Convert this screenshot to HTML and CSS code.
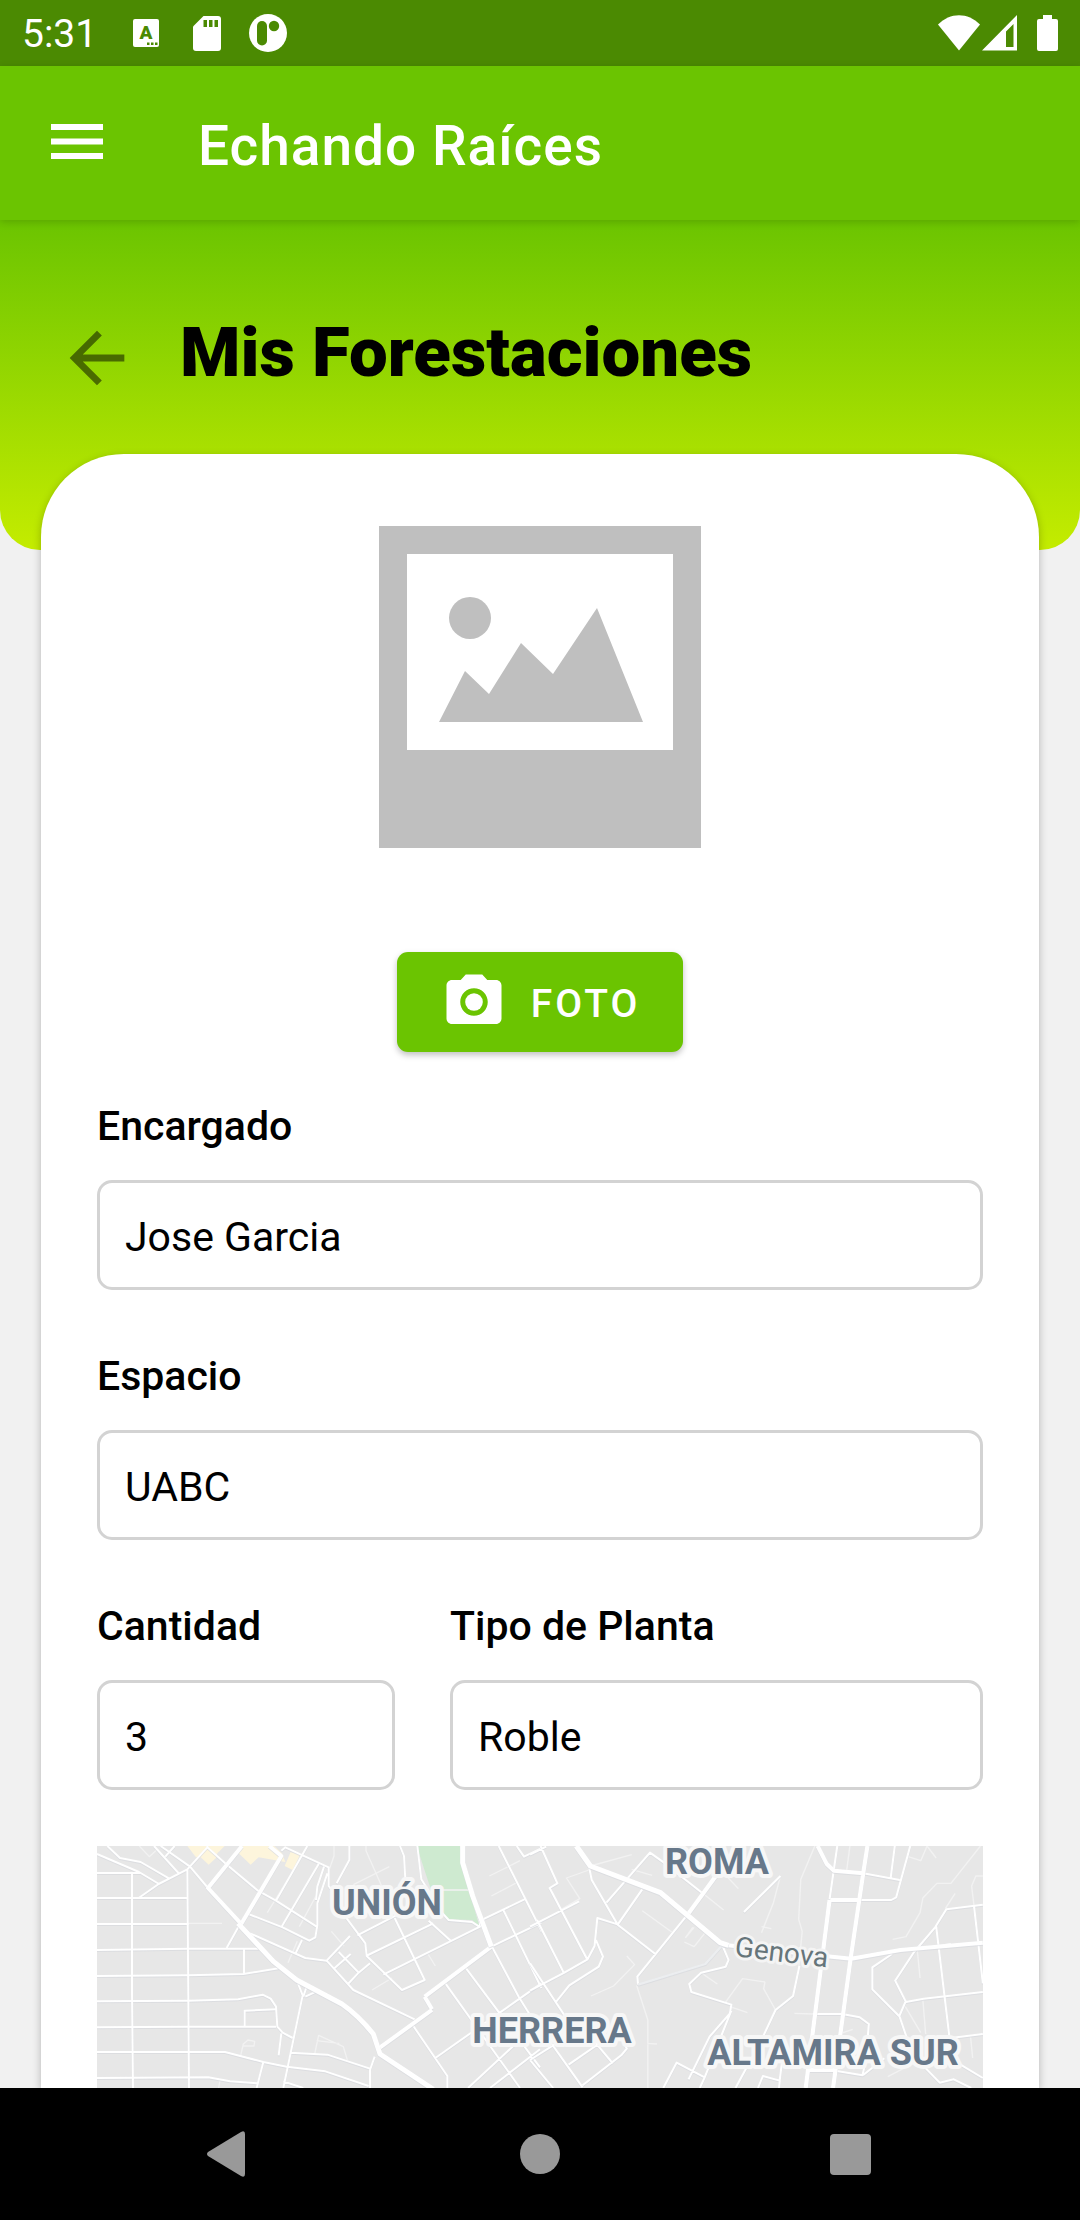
FILE: index.html
```html
<!DOCTYPE html>
<html lang="es">
<head>
<meta charset="utf-8">
<meta name="viewport" content="width=device-width, initial-scale=1">
<title>Echando Raíces</title>
<link rel="stylesheet" href="styles.css">
</head>
<body>
<div class="app">
  <div class="status-bar">
    <span class="clock">5:31</span>
    <div class="notifications">
      <svg class="status-icon" width="26" height="28" viewBox="0 0 26 28" aria-hidden="true">
        <rect width="26" height="28" rx="2" fill="#fff"/>
        <text class="badge-letter" x="13" y="20" text-anchor="middle">A</text>
        <path d="M14 23.500h2.500v2.500h-2.500zM18 23.500h2.500v2.500h-2.500zM22 23.500h2.500v2.500h-2.500z" fill="#4b8a02"/>
      </svg>
      <svg class="status-icon" width="28" height="35" viewBox="0 0 28 35" aria-hidden="true">
        <path d="M10.500 0H25a3 3 0 0 1 3 3v29a3 3 0 0 1-3 3H3a3 3 0 0 1-3-3V10.500z" fill="#fff"/>
        <path d="M10.500 4h3.500v7h-3.500zM16 4h3.500v7H16zM21.500 4H25v7h-3.500z" fill="#4b8a02"/>
      </svg>
      <svg class="status-icon" width="38" height="38" viewBox="0 0 38 38" aria-hidden="true">
        <circle cx="19" cy="19" r="19" fill="#fff"/>
        <rect x="8" y="7" width="10" height="24.500" rx="5" fill="#4b8a02"/>
        <circle cx="25" cy="12" r="5.200" fill="#4b8a02"/>
      </svg>
    </div>
    <div class="system">
      <svg class="status-icon" width="42" height="36" viewBox="0 0 42 36" aria-hidden="true">
        <path d="M21 35.500 0 9.500C12-3 30-3 42 9.500z" fill="#fff"/>
      </svg>
      <svg class="status-icon" width="36" height="36" viewBox="0 0 36 36" aria-hidden="true">
        <path fill-rule="evenodd" d="M0 35.500 35 0v35.500zM24 16.500V32h7.500V9z" fill="#fff"/>
      </svg>
      <svg class="status-icon battery" width="21" height="36" viewBox="0 0 21 36" aria-hidden="true">
        <path d="M6 0h9v4h4a2 2 0 0 1 2 2v28a2 2 0 0 1-2 2H2a2 2 0 0 1-2-2V6a2 2 0 0 1 2-2h4z" fill="#fff"/>
      </svg>
    </div>
  </div>

  <header class="app-bar">
    <button class="icon-button" type="button" aria-label="Menú">
      <svg width="70" height="70" viewBox="0 0 70 70"><path d="M9 18h52v6H9zM9 32.500h52v6H9zM9 47h52v6H9z" fill="#fff"/></svg>
    </button>
    <h1 class="app-title">Echando Raíces</h1>
  </header>

  <main class="content">
    <section class="hero">
      <button class="icon-button" type="button" aria-label="Volver">
        <svg width="82" height="82" viewBox="0 0 24 24"><path d="M20 11H7.830l5.590-5.590L12 4l-8 8 8 8 1.410-1.410L7.830 13H20z" fill="#000" fill-opacity=".5"/></svg>
      </button>
      <h2 class="page-title">Mis Forestaciones</h2>
    </section>

    <form class="card">
      <svg class="photo" width="322" height="322" viewBox="0 0 322 322" role="img" aria-label="Sin imagen">
        <path fill="#bfbfbf" fill-rule="evenodd" d="M0 0h322v322H0zM28 28v196h266V28z"/>
        <circle cx="91" cy="92" r="21" fill="#bfbfbf"/>
        <path fill="#bfbfbf" d="M60 196 86 145l24 23 32-51 32 31 44-66 46 114z"/>
      </svg>

      <button class="photo-button" type="button">
        <svg width="66" height="66" viewBox="0 0 24 24" aria-hidden="true">
          <circle cx="12" cy="12" r="3.200" fill="#fff"/>
          <path fill="#fff" d="M9 2 7.170 4H4c-1.100 0-2 .9-2 2v12c0 1.100.9 2 2 2h16c1.100 0 2-.9 2-2V6c0-1.100-.9-2-2-2h-3.170L15 2H9zm3 15c-2.760 0-5-2.240-5-5s2.240-5 5-5 5 2.240 5 5-2.240 5-5 5z"/>
        </svg>
        <span class="photo-label">FOTO</span>
      </button>

      <div class="fields">
        <div class="field wide">
          <label for="encargado">Encargado</label>
          <input id="encargado" type="text" value="Jose Garcia">
        </div>
        <div class="field wide">
          <label for="espacio">Espacio</label>
          <input id="espacio" type="text" value="UABC">
        </div>
        <div class="field">
          <label for="cantidad">Cantidad</label>
          <input id="cantidad" type="text" inputmode="numeric" value="3">
        </div>
        <div class="field">
          <label for="planta">Tipo de Planta</label>
          <input id="planta" type="text" value="Roble">
        </div>
      </div>

      <svg class="map" viewBox="0 0 886 242" preserveAspectRatio="xMidYMin slice" role="img" aria-label="Mapa">
        <rect width="886" height="242" fill="#e7e7e7"/>
        <!-- west half -->
        <g transform="translate(-17 -16) scale(.33333)">
          <path fill="#fdf5dc" d="M322 48h112l-22 22-4 14-22 20-24-22-14 0zM490 48h92l24 22 10 26-80-14-24 22-36-34zM632 66l28 8-22 46-24-12z"/>
          <path fill="#ceead0" d="M1010 48h130l12 80 46 160-22-18-76-2-30-36z"/>
          <g class="road faint">
            <path d="M178 48 208 80l24-22M326 280h100M562 248 660 90M624 398l28-64M754 304l38 44M820 164l108-54M858 48v14l32 72 20 46M1228 138l92-46M1234 198l80-42M876 480l60-36M1044 372l22 36M482 676l8-34 14-12 20 4-2 14-34 0M704 672l12-56 74 34 12 40M710 632l68 8M762 48v30l-14 40M416 774l4-24M1086 180h80M658 290l50-92"/>
          </g>
          <g class="road minor">
            <path d="M51 129h130M51 204h270M51 282h275M51 360l275-4 212 0M51 438l275-2 164-4 110-18M51 514l275-2 148-4 74-14 24 12 16 24 4 60 16 18 30 16M51 592l275-2h262M51 666h384l115 30 70 14 116 14 130 44M51 744l334-2 65 12 82 6"/>
            <path d="M156 129v360l3 285M322 116l5 658M492 358v72M494 590v-48l96-4M604 610l-8 66M51 72l126 54 60 36M82 48l38 36 62 12 86 50M176 204l60-42 86-44 60-66 0-4M222 48l76 84M242 48l88 62 54 64M256 80l28-32M440 354l40-72M510 310l166 74 64 8 70-74M438 102l96 80 54 30 122 78M382 52l56 50M500 250l108 42 80 40 18-10 6-36 0-66 30-90M604 292l112-190M588 212l94-164M604 62l12-10 130 60 0 56 12 16M708 210l4-40 20-60M646 372l20-42"/>
            <path d="M740 392l80 88 184 88M764 414l48-42M776 366l60 62 34-28M804 462l32-34M808 48v42l-38 70M796 260l60 80 4 38 106 102 68-30-90-186M832 316l116-60 32-20M858 378l202-98M910 434l290-144 0-20M1046 272l66 60M960 48l12 30 4 70M1012 48l12 100 62 100 20 22 70 6 22 14M1196 274l142-68M1234 350l150-72M1256 48l130 258M1270 240l114 234M1310 48l22 32 50-24M1096 460l224 314M1156 412l224 300M1236 350l80 150 68 110M1000 588l102 150 0 36M1066 684l318-224M1164 774l216-200M1230 774l150-116M650 450l18 46-58 278M632 668l110 6 128 42M610 754l60 20M870 774l0-54 14-40M550 696l-20 78M676 500l34-16M680 470l-10 30"/>
          </g>
          <g class="road medium"><path d="M486 48 384 174l96 104M568 48l36 30-124 210M1034 500l22 38M892 658l164-118M1034 500l200-150"/></g>
          <g class="road major"><path d="M474 280 580 394l70 56 136 72c46 32 70 60 94 90l20 60 160 106M1148 48v50l30 100 56 152"/></g>
        </g>
        <!-- east half -->
        <g transform="translate(433 -16) scale(.35077 .33333)">
          <g class="road faint">
            <path d="M172 108l118-34M168 120l-64 24 38 62-56 34M290 118l58 18M560 138l34 38M488 186l64 54M320 242l84 64M464 292l-20 30 24-30M440 336l28 14 36-48M276 378l22 26-60 64-64 30M304 466l32 104v204M334 640l28 2M490 430l44 32M570 530l50 18M812 48l-40 100-6 120 10 36-10 110M714 138l-20 80-34 90M660 290l28 6M670 456l-64-10-52 76M670 456l-4 20 34 64M754 550l52 2M912 48l-10 80M1078 80l36 12 18-44 26 36M1284 48l-84 112-40 0-40 44-8 44-40 72-38 8M1212 190l-28 46M1291 138l-20 0-12 30 8 70M1104 360l8 84M1120 510l8 102M1070 530l44 78M886 610l34-12M1256 620l6 64M1020 740l80-44"/>
          </g>
          <g class="road minor">
            <path d="M0 74l46-24M30 48l48 112-22 14 108 216M0 290l140-76M0 400l98 156M20 270l76 158M0 482l98-54 66-40 20-40 8-84 60 20M168 110l8 40 74 134 70-106M218 218l124-150 40 30 110 92M250 284l110 90M452 250l-146 190 2 24M188 330l20 50-12 30-84 56-38 50M0 690l120-80M62 642l88 130M150 766l110-90 16-20-10-20M0 690l66 84M180 630l56 70M110 704l110-80M550 350l16 40-8 20-70 18-34 34 6 24 114 38-4 26-58 70-60 128M380 774l38-76 80 44 76-200M498 742l-14 32M586 774l72-140 42-94 50-42 18-90M610 246l104-108M650 774l14-36 48 14-2 22M712 750l6-50M806 552h84l50 10 26 20-4 50M876 48l-22 160M940 210h90l14-8 40-154M950 130l104 20M1040 48l-12 98M950 735l60-50M870 722l78 14 6-30"/>
            <path d="M1291 224l-104 14-32 54-60 74-54 86 30 62-18 44 20 62M1158 290l38 334M1266 230l25 230M1032 372l-56 40 0 66 76 80M1072 516l50-10 169-20M1200 624l91-12M1120 706l48 52 40-10 50 26M1212 694l79 50M1150 350l50-8"/>
          </g>
          <path d="M308 464 500 402l46-54" class="road canal"/>
          <g class="road medium"><path d="M452 250l82-118M856 210h82M790 720h80M820 48l26 54 20 20 84 8M550 344l290 34 76 8 140-26 235-22M950 130l12-82M950 130 914 386 864 774M854 210 786 774"/></g>
          <g class="road major"><path d="M132 48l40 60 200 80 170 150 24 8"/></g>
        </g>
        <g class="place">
          <text x="290" y="69" text-anchor="middle">UNIÓN</text>
          <text x="620" y="28" text-anchor="middle">ROMA</text>
          <text x="455" y="197" text-anchor="middle">HERRERA</text>
          <text x="736" y="219" text-anchor="middle">ALTAMIRA SUR</text>
        </g>
        <text class="street" x="637" y="110" transform="rotate(7 637 110)">Genova</text>
      </svg>
    </form>
  </main>

  <nav class="nav-bar" aria-label="Sistema">
    <button class="nav-button" type="button" aria-label="Atrás">
      <svg width="48" height="48" viewBox="0 0 48 48"><path d="M2 22 35 2q4-2 4 2v40q0 4-4 2L2 26q-2-2 0-4z" fill="#999"/></svg>
    </button>
    <button class="nav-button" type="button" aria-label="Inicio">
      <svg width="48" height="48" viewBox="0 0 48 48"><circle cx="24" cy="24" r="20" fill="#999"/></svg>
    </button>
    <button class="nav-button" type="button" aria-label="Recientes">
      <svg width="48" height="48" viewBox="0 0 48 48"><rect x="4" y="4" width="41" height="41" rx="4" fill="#999"/></svg>
    </button>
  </nav>
</div>
</body>
</html>
```

FILE: styles.css
```css
* {
  box-sizing: border-box;
}

body {
  margin: 0;
  background: #f1f1f1;
  color: #000;
  font-family: Roboto, "Liberation Sans", sans-serif;
}

svg {
  display: block;
}

button {
  border: 0;
  padding: 0;
  background: none;
  font: inherit;
  color: inherit;
}

.app {
  display: flex;
  flex-direction: column;
  height: 100vh;
}

/* Status bar */
.status-bar {
  display: flex;
  flex: none;
  align-items: center;
  height: 66px;
  padding: 0 22px;
  background: #4b8a02;
  color: #fff;
}

.clock {
  font-size: 39px;
  line-height: 46px;
  padding-top: 2px;
}

.notifications {
  display: flex;
  align-items: center;
  gap: 28px;
  margin-left: 36px;
}

.notifications .status-icon:first-child {
  margin-right: 6px;
}

.badge-letter {
  font-size: 19px;
  font-weight: 900;
  fill: #4b8a02;
}

.system {
  display: flex;
  align-items: center;
  gap: 2px;
  margin-left: auto;
}

.battery {
  margin-left: 17px;
}

/* App bar */
.app-bar {
  position: relative;
  z-index: 1;
  display: flex;
  flex: none;
  align-items: flex-start;
  gap: 86px;
  height: 154px;
  padding: 40px 42px 0;
  background: #6bc401;
  color: #fff;
  box-shadow: 0 2px 8px rgba(0, 0, 0, 0.16);
}

.app-title {
  margin: 0;
  padding-top: 8px;
  font-size: 55px;
  font-weight: 500;
  letter-spacing: 1px;
  line-height: 64px;
}

/* Page */
.content {
  display: flex;
  flex: 1;
  flex-direction: column;
  min-height: 0;
  overflow: hidden;
}

.hero {
  display: flex;
  flex: none;
  align-items: flex-start;
  gap: 42px;
  height: 330px;
  padding: 93px 56px 0;
  border-radius: 0 0 40px 40px;
  background: linear-gradient(#6bc401, #c4ec00);
}

.hero .icon-button {
  padding-top: 4px;
}

.page-title {
  margin: 0;
  font-size: 69px;
  font-weight: 900;
  line-height: 80px;
}

.card {
  display: flex;
  flex: 1;
  flex-direction: column;
  align-items: center;
  min-height: 0;
  margin: -96px 41px 0;
  padding: 72px 56px 0;
  border-radius: 83px 83px 0 0;
  background: #fff;
  box-shadow: 0 3px 9px rgba(0, 0, 0, 0.25);
}

.photo {
  flex: none;
}

.photo-button {
  display: flex;
  flex: none;
  align-items: center;
  gap: 24px;
  height: 100px;
  margin-top: 104px;
  padding: 0 43px 0 44px;
  border-radius: 11px;
  background: #6bc401;
  color: #fff;
  font-size: 39px;
  font-weight: 500;
  letter-spacing: 3px;
  line-height: 46px;
  box-shadow: 0 3px 6px rgba(0, 0, 0, 0.25);
}

.photo-label {
  padding-top: 4px;
}

.fields {
  display: grid;
  flex: none;
  grid-template-columns: 298fr 533fr;
  gap: 62px 55px;
  width: 100%;
  margin-top: 50px;
}

.field {
  display: flex;
  flex-direction: column;
  gap: 30px;
  min-width: 0;
}

.wide {
  grid-column: 1 / -1;
}

.field label {
  font-size: 41px;
  font-weight: 500;
  line-height: 48px;
}

.field input {
  width: 100%;
  height: 110px;
  padding: 4px 25px 0;
  border: 3px solid #d3d3d3;
  border-radius: 15px;
  background: #fff;
  color: #000;
  font: 400 41px/48px Roboto, "Liberation Sans", sans-serif;
}

/* Map */
.map {
  flex: 1;
  width: 100%;
  min-height: 0;
  margin-top: 56px;
}

.road {
  fill: none;
  stroke: #fff;
  stroke-linejoin: round;
  filter: drop-shadow(0 2px 0 #d6d8dd);
}

.faint {
  stroke: #f2f2f2;
  stroke-width: 4px;
  filter: none;
}

.minor {
  stroke-width: 6px;
}

.medium {
  stroke-width: 12px;
}

.major {
  stroke-width: 15px;
}

.canal {
  stroke: #eceef0;
  stroke-width: 7px;
}

.place {
  fill: #67788a;
  stroke: #f7f7f7;
  stroke-width: 8px;
  stroke-linejoin: round;
  paint-order: stroke;
  font-size: 36px;
  font-weight: 700;
}

.street {
  fill: #66757a;
  stroke: #f4f4f4;
  stroke-width: 6px;
  stroke-linejoin: round;
  paint-order: stroke;
  font-size: 28px;
}

/* System navigation */
.nav-bar {
  display: flex;
  flex: none;
  align-items: center;
  justify-content: space-between;
  height: 132px;
  padding: 0 206px;
  background: #000;
}
```
